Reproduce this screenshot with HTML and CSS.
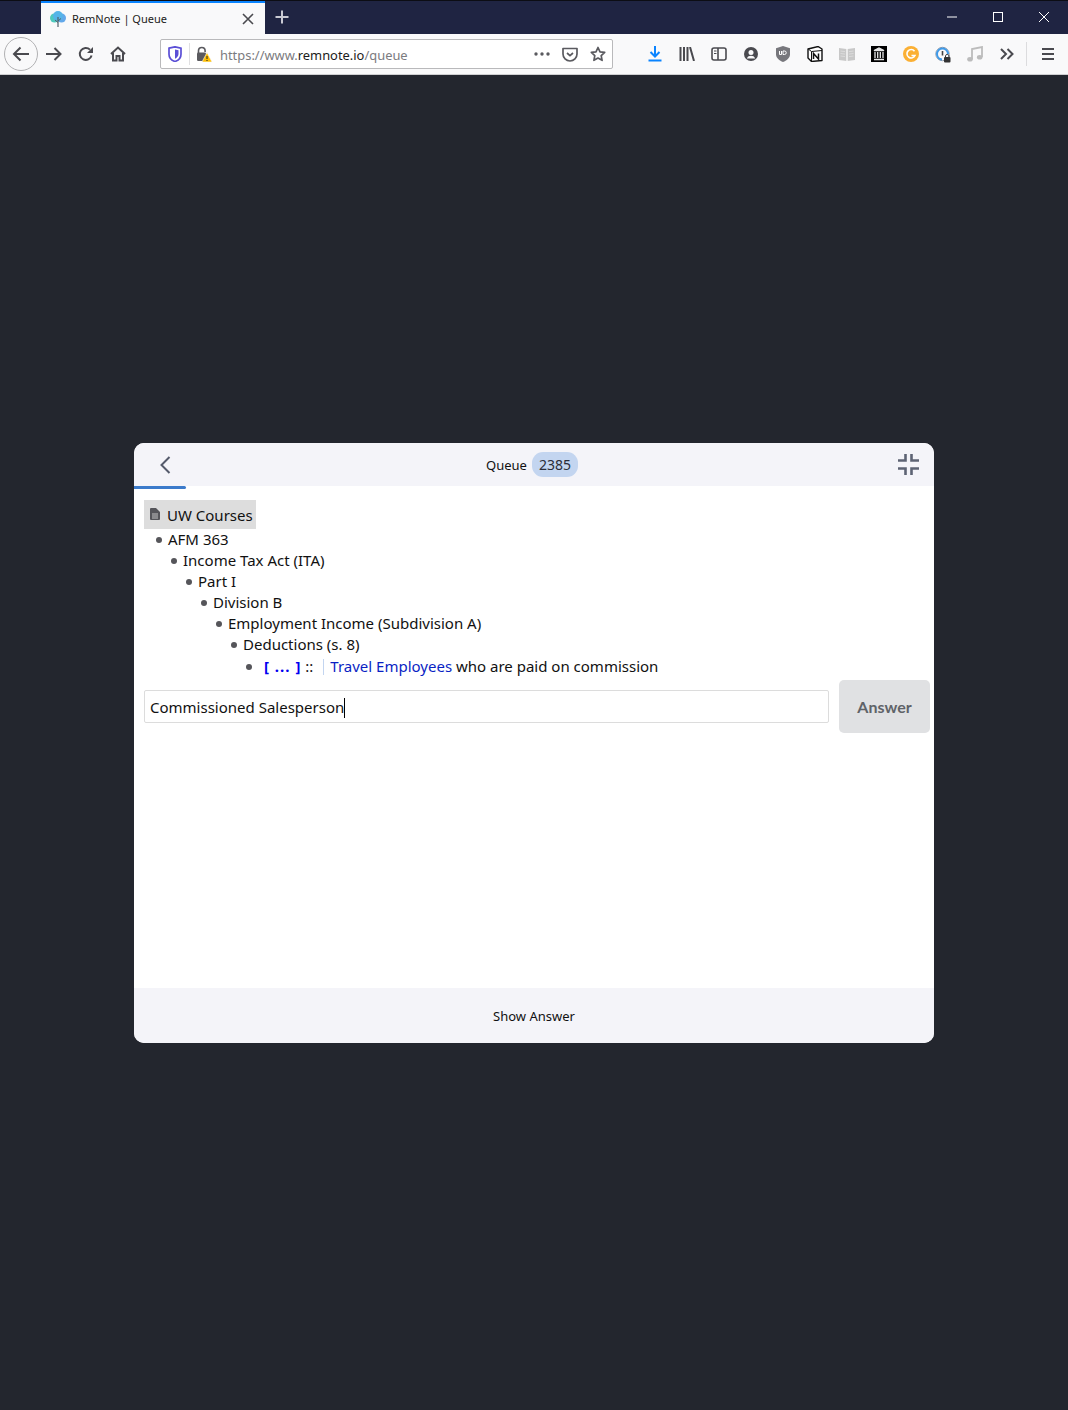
FILE: index.html
```html
<!DOCTYPE html>
<html>
    <head>
        <meta charset="utf-8">
        <title>RemNote | Queue</title>
        <link rel="stylesheet" href="styles.css">
    </head>
    <body>
      <div class="tabbar">
        <div class="tab">
          <svg class="tabIcon" width="16" height="16" viewBox="0 0 16 16">
            <circle cx="4.500" cy="7" r="4.500" fill="#4fc9bd"/>
            <circle cx="11.500" cy="7" r="4.500" fill="#62a8ea"/>
            <circle cx="8" cy="5" r="5" fill="#55b4e8"/>
            <path d="M8 11.500L5 9M8 10l3-2.500" stroke="#50606c" stroke-width="1"/>
            <path d="M7.400 6v10h1.200V6z" fill="#50606c"/>
          </svg>
          <span class="tabTitle">RemNote | Queue</span>
          <svg class="tabClose" width="12" height="12" viewBox="0 0 12 12"><path d="M1 1l10 10M11 1L1 11" stroke="#4a4a4f" stroke-width="1.600"/></svg>
        </div>
        <svg class="newTab" width="16" height="16" viewBox="0 0 16 16"><path d="M8 1.500v13M1.500 8h13" stroke="#c9cad3" stroke-width="2"/></svg>
        <div class="windowBtns">
          <div class="winBtn"><svg width="12" height="12" viewBox="0 0 12 12"><path d="M1 6h10" stroke="#fff" stroke-width="1"/></svg></div>
          <div class="winBtn"><svg width="12" height="12" viewBox="0 0 12 12"><rect x="1.500" y="1.500" width="9" height="9" fill="none" stroke="#fff"/></svg></div>
          <div class="winBtn"><svg width="12" height="12" viewBox="0 0 12 12"><path d="M1 1l10 10M11 1L1 11" stroke="#fff" stroke-width="1"/></svg></div>
        </div>
      </div>

      <div class="navbar">
        <div class="backBtn">
          <svg width="18" height="16" viewBox="0 0 18 16"><path d="M17 8H2M8.500 1.500L2 8l6.500 6.500" fill="none" stroke="#4a4a4f" stroke-width="2"/></svg>
        </div>
        <div class="navBtn"><svg width="16" height="16" viewBox="0 0 16 16"><path d="M0 8h14.500M8.500 2l6 6-6 6" fill="none" stroke="#4a4a4f" stroke-width="2"/></svg></div>
        <div class="navBtn"><svg width="16" height="16" viewBox="0 0 16 16"><path d="M13.600 9.500A6 6 0 1 1 12 3.600" fill="none" stroke="#4a4a4f" stroke-width="2"/><path d="M15 1v6H9z" fill="#4a4a4f"/></svg></div>
        <div class="navBtn"><svg width="16" height="16" viewBox="0 0 16 16"><path d="M1 8l7-6.500L15 8M3 7v7.500h3.500V10h3v4.500H13V7" fill="none" stroke="#4a4a4f" stroke-width="2"/></svg></div>

        <div class="urlbar">
          <svg class="urlShield" width="14" height="16" viewBox="0 0 14 16"><path d="M1 2.200L7 .8l6 1.400v6C13 12 10 14.500 7 15.500 4 14.500 1 12 1 8.200z" fill="none" stroke="#5b4fd6" stroke-width="1.700"/><path d="M7 3.500l3.500.8v3.700c0 2.300-1.700 3.800-3.500 4.700z" fill="#5b4fd6"/></svg>
          <div class="urlDivider"></div>
          <svg class="urlLock" width="16" height="17" viewBox="0 0 16 17"><path d="M2.500 7V4.800a3.300 3.300 0 0 1 6.600 0V6" fill="none" stroke="#5a5a5f" stroke-width="1.600"/><rect x="1" y="6.500" width="9" height="8.500" rx="1.200" fill="#5a5a5f"/><path d="M11 6.500l5 9.500H6z" fill="#ffbf00" stroke="#f9f9fa" stroke-width=".6"/><path d="M11 10v3M11 14v1" stroke="#222" stroke-width="1"/></svg>
          <div class="url"><span class="urlDim">https://www.</span>remnote.io<span class="urlDim">/queue</span></div>
          <svg class="urlDots" width="16" height="4" viewBox="0 0 16 4"><circle cx="2" cy="2" r="1.700" fill="#5a5a5f"/><circle cx="8" cy="2" r="1.700" fill="#5a5a5f"/><circle cx="14" cy="2" r="1.700" fill="#5a5a5f"/></svg>
          <svg class="urlPocket" width="16" height="15" viewBox="0 0 16 15"><path d="M1 1.500h14v5.500a7 7 0 0 1-14 0z" fill="none" stroke="#5a5a5f" stroke-width="1.700" stroke-linejoin="round"/><path d="M5 6l3 2.700L11 6" fill="none" stroke="#5a5a5f" stroke-width="1.700"/></svg>
          <svg class="urlStar" width="16" height="16" viewBox="0 0 16 16"><path d="M8 1.500l2 4.300 4.700.6-3.500 3.200.9 4.700L8 12l-4.100 2.300.9-4.700L1.300 6.400 6 5.800z" fill="none" stroke="#5a5a5f" stroke-width="1.700" stroke-linejoin="round"/></svg>
        </div>

        <div class="toolbar">
          <div class="toolBtn"><svg width="16" height="16" viewBox="0 0 16 16"><path d="M8 0v10M3.500 6L8 10.500 12.500 6" fill="none" stroke="#0a84ff" stroke-width="2"/><path d="M1.500 14.500h13" stroke="#0a84ff" stroke-width="2"/></svg></div>
          <div class="toolBtn"><svg width="16" height="14" viewBox="0 0 16 14"><path d="M1.500 0v14M5 0v14M8.500 0v14M11 0l4 14" stroke="#4a4a4f" stroke-width="2"/></svg></div>
          <div class="toolBtn"><svg width="16" height="14" viewBox="0 0 16 14"><rect x="1" y="1" width="14" height="12" rx="2" fill="none" stroke="#4a4a4f" stroke-width="1.600"/><path d="M7 1v12" stroke="#4a4a4f" stroke-width="1.600"/><path d="M3 4h2.500M3 6.500h2.500" stroke="#4a4a4f"/></svg></div>
          <div class="toolBtn"><svg width="14" height="14" viewBox="0 0 14 14"><circle cx="7" cy="7" r="7" fill="#4a4a4f"/><circle cx="7" cy="5.500" r="2.500" fill="#f9f9fa"/><path d="M2.800 11.500c.8-2 2.400-2.700 4.200-2.700s3.400.7 4.200 2.700" fill="#f9f9fa"/></svg></div>
          <div class="toolBtn"><svg width="14" height="16" viewBox="0 0 14 16"><path d="M0 2.200L7 0l7 2.200v6.300C14 12 10.500 14.500 7 16 3.500 14.500 0 12 0 8.500z" fill="#77777c"/><path d="M3.500 5v3.500h2V5M7 5v3.500h1.500a1.700 1.700 0 0 0 0-3.500z" fill="none" stroke="#fff"/></svg></div>
          <div class="toolBtn"><svg width="16" height="16" viewBox="0 0 16 16"><path d="M1 3l10-2.500L15 3v11.500L4.500 15.500 1 12z" fill="#fff" stroke="#111" stroke-width="1.400" stroke-linejoin="round"/><path d="M1.500 3.200l3 2.300L15 4.500M4.500 5.500v10" fill="none" stroke="#111"/><path d="M6.500 13V7.500l5 5.500V7.500" fill="none" stroke="#111" stroke-width="1.500"/></svg></div>
          <div class="toolBtn"><svg width="16" height="15" viewBox="0 0 16 15"><path d="M0 1l7.300 1v12L0 13zM16 1l-7.300 1v12l7.300-1z" fill="#c8c8c8"/><path d="M1.500 4l4.500.6M1.500 6.500l4.500.6M1.500 9l4.500.6M14.500 4l-4.500.6M14.500 6.500l-4.500.6M14.500 9l-4.500.6" stroke="#dcdcdc"/></svg></div>
          <div class="toolBtn"><svg width="16" height="16" viewBox="0 0 16 16"><rect width="16" height="16" fill="#000"/><path d="M3 4.500l5-2.500 5 2.500zM3 13.500h10M4 6v6M6.700 6v6M9.300 6v6M12 6v6" fill="#e8e8e8" stroke="#e8e8e8" stroke-width="1.300"/></svg></div>
          <div class="toolBtn"><svg width="16" height="16" viewBox="0 0 16 16"><circle cx="8" cy="8" r="8" fill="#fbb034"/><path d="M11.500 5.200A4.200 4.200 0 1 0 12 9.500H8.500" fill="none" stroke="#fff" stroke-width="1.600"/></svg></div>
          <div class="toolBtn"><svg width="16" height="17" viewBox="0 0 16 17"><circle cx="7.500" cy="8" r="6.700" fill="none" stroke="#8f99a8" stroke-width="1"/><path d="M2 8a5.500 5.500 0 0 1 11 0" fill="none" stroke="#3f9ae8" stroke-width="2"/><path d="M2 8a5.500 5.500 0 0 0 5 5.500" fill="none" stroke="#3f9ae8" stroke-width="2"/><path d="M7.500 5v4.500" stroke="#444" stroke-width="1.600"/><rect x="9" y="11" width="6.500" height="5.500" rx="1" fill="#333"/><path d="M10.500 11V9.800a1.800 1.800 0 0 1 3.500 0V11" fill="none" stroke="#333"/></svg></div>
          <div class="toolBtn"><svg width="16" height="16" viewBox="0 0 16 16"><path d="M5 13V3l10-2v10" fill="none" stroke="#bcbcbc" stroke-width="1.800"/><ellipse cx="3" cy="13.200" rx="2.800" ry="2.300" fill="#bcbcbc"/><ellipse cx="12.700" cy="11.200" rx="2.800" ry="2.300" fill="#bcbcbc"/></svg></div>
          <div class="toolBtn"><svg width="14" height="12" viewBox="0 0 14 12"><path d="M1 1l5 5-5 5M7.500 1l5 5-5 5" fill="none" stroke="#4a4a4f" stroke-width="2"/></svg></div>
          <div class="toolDivider"></div>
          <div class="menuBtn"><svg width="12" height="12" viewBox="0 0 12 12"><path d="M0 1h12M0 6h12M0 11h12" stroke="#4a4a4f" stroke-width="1.800"/></svg></div>
        </div>
      </div>

      <div class="page">
        <div class="card">
          <div class="cardHeader">
            <svg class="backChevron" width="12" height="18" viewBox="0 0 12 18"><path d="M10.500 1L2.500 9l8 8" fill="none" stroke="#545a6b" stroke-width="2"/></svg>
            <div class="queueTitle"><span class="queueLabel">Queue</span> <span class="queueCount">2385</span></div>
            <svg class="collapseIcon" width="21" height="21" viewBox="0 0 21 21"><path d="M7.500 0v6.500H0M13.500 0v6.500H21M7.500 21v-6.500H0M13.500 21v-6.500H21" fill="none" stroke="#5d6374" stroke-width="2.600"/></svg>
          </div>
          <div class="progress"></div>

          <div class="cardBody">
            <div class="docChip">
              <svg width="10" height="12" viewBox="0 0 10 12"><path d="M0 1a1 1 0 0 1 1-1h5l4 4v7a1 1 0 0 1-1 1H1a1 1 0 0 1-1-1z" fill="#55555a"/><path d="M2 6h6M2 8h6M2 10h6" stroke="#ddd" stroke-width=".8"/></svg>
              <span class="docName">UW Courses</span>
            </div>
            <ul class="tree">
              <li class="depth0">AFM 363</li>
              <li class="depth1">Income Tax Act (ITA)</li>
              <li class="depth2">Part I</li>
              <li class="depth3">Division B</li>
              <li class="depth4">Employment Income (Subdivision A)</li>
              <li class="depth5">Deductions (s. 8)</li>
              <li class="depth6"><span class="cloze">[ ... ]</span> <span class="colons">::</span><span class="pipe"></span><span class="link">Travel Employees</span> who are paid on commission</li>
            </ul>
            <div class="answerRow">
              <div class="answerInput">Commissioned Salesperson<span class="caret"></span></div>
              <div class="answerBtn">Answer</div>
            </div>
          </div>

          <div class="cardFooter">Show Answer</div>
        </div>
      </div>
    </body>
</html>
```

FILE: styles.css
```css
html, body {
    margin: 0;
    height: 100%;
}

body {
    display: flex;
    flex-direction: column;
    font-family: "Noto Sans", "Open Sans", sans-serif;
    background-color: #23262e;
    overflow: hidden;
}

svg { display: block; flex: none; }

/* tab strip */
.tabbar {
    height: 33px;
    flex: none;
    display: flex;
    align-items: stretch;
    padding-left: 41px;
    background-color: #1f2442;
    border-top: 1px solid #0c0d14;
}

.tab {
    width: 224px;
    display: flex;
    align-items: center;
    box-sizing: border-box;
    padding: 0 11px 0 9px;
    background-color: #f9f9fa;
    border-top: 2px solid #0a84ff;
}

.tabIcon { margin-right: 6px; }

.tabTitle {
    flex: 1;
    font-size: 11px;
    color: #1c1c20;
}

.newTab { align-self: center; margin: 0 0 1px 9px; }

.windowBtns {
    margin-left: auto;
    display: flex;
    align-items: center;
    padding: 0 1px 1px 0;
}

.winBtn {
    width: 46px;
    display: flex;
    justify-content: center;
}

/* nav bar */
.navbar {
    height: 41px;
    flex: none;
    display: flex;
    align-items: center;
    box-sizing: border-box;
    padding-left: 4px;
    background-color: #f9f9fa;
    border-bottom: 1px solid #cfcfd1;
}

.backBtn {
    width: 32px;
    height: 32px;
    border: 1px solid #b1b1b3;
    border-radius: 50%;
    display: flex;
    align-items: center;
    justify-content: center;
}

.navBtn {
    width: 32px;
    display: flex;
    justify-content: center;
}

.urlbar {
    width: 451px;
    height: 28px;
    margin-left: 26px;
    display: flex;
    align-items: center;
    background-color: #fff;
    border: 1px solid #b9b9bb;
    border-radius: 2px;
}

.urlShield { margin-left: 7px; }

.urlDivider {
    width: 1px;
    height: 22px;
    margin-left: 7px;
    background-color: #e0e0e2;
}

.urlLock { margin-left: 6px; }

.url {
    flex: 1;
    margin: 2px 0 0 8px;
    font-size: 12.900px;
    color: #1c1c20;
}

.urlDim { color: #7b7b80; }

.urlDots { margin-right: 12px; }
.urlPocket { margin-right: 12px; }
.urlStar { margin-right: 6px; }

.toolbar {
    display: flex;
    align-items: center;
    margin-left: 26px;
}

.toolBtn {
    width: 32px;
    display: flex;
    justify-content: center;
}

.toolDivider {
    width: 1px;
    height: 24px;
    margin-left: 3px;
    background-color: #dcdcde;
}

.menuBtn { margin-left: 15px; }

/* flashcard */
.page {
    flex: 1;
    display: flex;
    align-items: center;
    justify-content: center;
}

.card {
    width: 800px;
    height: 600px;
    display: flex;
    flex-direction: column;
    background-color: #fff;
    border-radius: 10px;
    overflow: hidden;
    color: #111;
}

.cardHeader {
    height: 43px;
    flex: none;
    display: flex;
    align-items: center;
    justify-content: center;
    position: relative;
    background-color: #f4f4f9;
}

.backChevron {
    position: absolute;
    left: 25px;
    top: 13px;
}

.collapseIcon {
    position: absolute;
    right: 15px;
    top: 11px;
}

.queueTitle {
    font-size: 13px;
    display: flex;
    align-items: center;
    gap: 5px;
    padding-right: 4px;
}

.queueLabel { padding-top: 2px; }

.queueCount {
    padding: 0 7px;
    height: 25px;
    line-height: 25px;
    font-size: 14px;
    border-radius: 11px;
    background-color: #c3d5f0;
    color: #2a2d3a;
}

.progress {
    width: 52px;
    height: 3px;
    flex: none;
    background-color: #3b7bcb;
    border-radius: 0 2px 2px 0;
}

.cardBody {
    flex: 1;
    padding: 11px 4px 0 10px;
}

.docChip {
    display: inline-flex;
    align-items: center;
    gap: 7px;
    height: 29px;
    padding: 0 3px 0 6px;
    font-size: 15px;
    background-color: #dddddd;
    vertical-align: top;
}

.docName { padding-top: 2px; }

.tree {
    list-style: none;
    margin: 0;
    padding: 0;
    font-size: 15px;
    line-height: 21px;
}

.tree li {
    white-space: nowrap;
}

.tree li::before {
    content: "";
    display: inline-block;
    width: 6px;
    height: 6px;
    margin-right: 6px;
    border-radius: 50%;
    background-color: #55555a;
    vertical-align: 2px;
}

.depth0 { padding-left: 12px; }
.depth1 { padding-left: 27px; }
.depth2 { padding-left: 42px; }
.depth3 { padding-left: 57px; }
.depth4 { padding-left: 72px; }
.depth5 { padding-left: 87px; }
.tree .depth6 { padding-left: 102px; margin-top: 1px; }

.tree .depth6::before { margin-right: 12px; }

.cloze {
    font-weight: bold;
    letter-spacing: 1px;
    color: #0000f0;
}

.colons { margin-left: 0; }

.pipe {
    display: inline-block;
    width: 1px;
    height: 16px;
    margin: 0 6px 0 10px;
    background-color: #c3d5f0;
    vertical-align: -3px;
}

.link { color: #0a1fc4; }

.answerRow {
    display: flex;
    align-items: center;
    gap: 10px;
    margin-top: 3px;
}

.answerInput {
    flex: 1;
    height: 31px;
    line-height: 33px;
    padding-left: 5px;
    font-size: 15px;
    border: 1px solid #dcdcdc;
    border-radius: 2px;
}

.caret {
    display: inline-block;
    width: 1px;
    height: 20px;
    background-color: #000;
    vertical-align: -5px;
}

.answerBtn {
    width: 91px;
    height: 53px;
    display: flex;
    align-items: center;
    justify-content: center;
    font-family: Lato, sans-serif;
    font-size: 16px;
    font-weight: bold;
    color: #5f6368;
    background-color: #e0e1e3;
    border-radius: 5px;
}

.cardFooter {
    height: 55px;
    box-sizing: border-box;
    padding-top: 2px;
    flex: none;
    display: flex;
    align-items: center;
    justify-content: center;
    font-size: 13px;
    background-color: #f4f4f9;
}
```
